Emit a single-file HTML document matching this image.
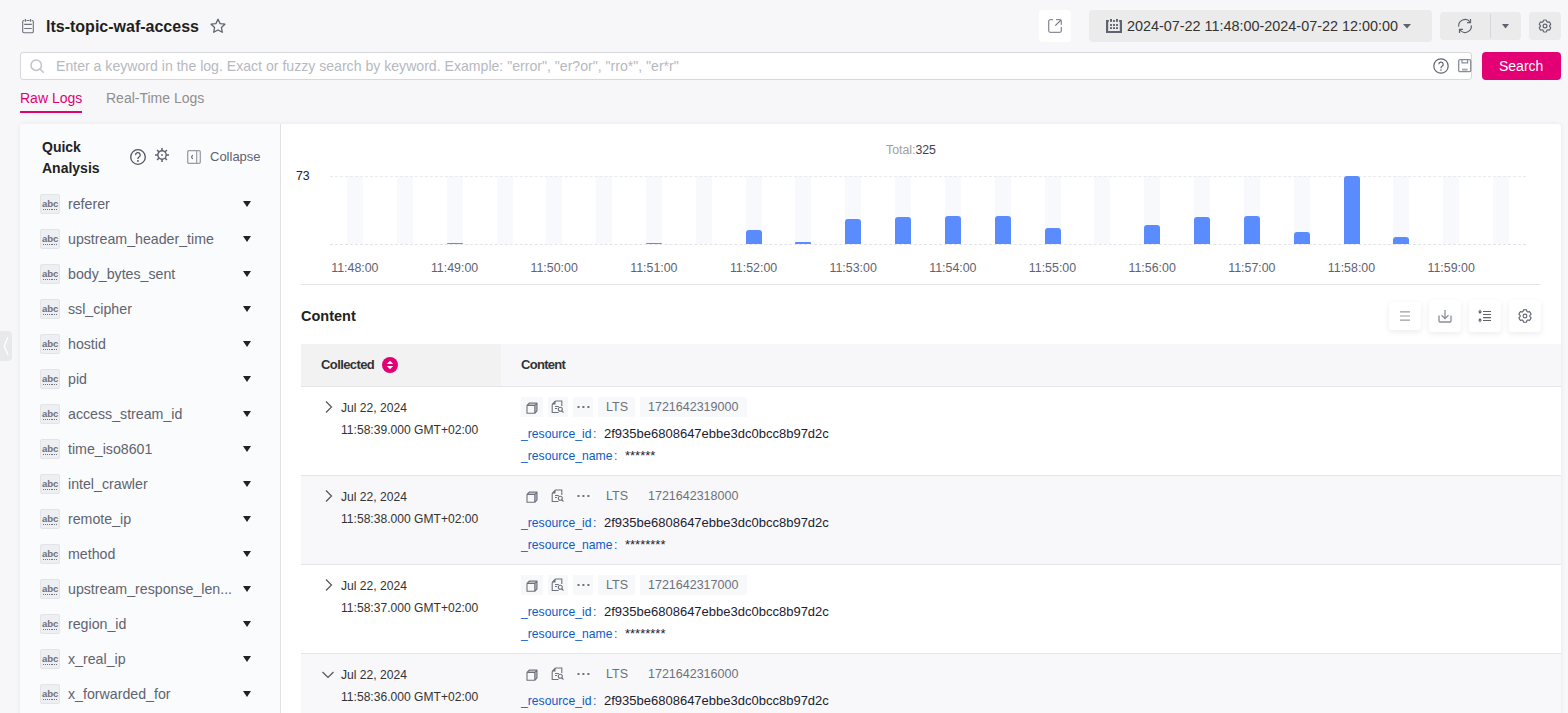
<!DOCTYPE html>
<html><head><meta charset="utf-8">
<style>
*{box-sizing:border-box;margin:0;padding:0}
html,body{width:1568px;height:713px;overflow:hidden}
body{background:#f7f7f9;font-family:"Liberation Sans",sans-serif;color:#222;position:relative}
.abs{position:absolute}
.t{position:absolute;white-space:nowrap;line-height:1}
svg{position:absolute;overflow:visible}
.btn{position:absolute;border-radius:4px}
.field{position:absolute;left:40px;width:230px;height:20px}
.field .ic{position:absolute;left:0;top:0;width:20px;height:20px;background:#eeeff2;border:1px solid #e3e4e8;border-radius:2px}
.field .ic span{position:absolute;left:1px;top:4px;font-size:9.6px;font-weight:bold;color:#6d717b;line-height:1;letter-spacing:-0.1px}
.field .ic i{position:absolute;left:2px;top:14px;width:15px;height:1.2px;background:repeating-linear-gradient(90deg,#6d717b 0 1.1px,transparent 1.1px 2.1px)}
.field .nm{position:absolute;left:28px;top:3px;font-size:14.2px;color:#5f6370;line-height:1;white-space:nowrap}
.field .dd{position:absolute;left:203px;top:7px;width:0;height:0;border-left:4.5px solid transparent;border-right:4.5px solid transparent;border-top:6px solid #222}
.slot{position:absolute;top:176px;width:16px;height:68px;background:#f8f9fd}
.bar{position:absolute;width:16px;background:#5b8cff;border-radius:3px 3px 0 0}
.xl{position:absolute;top:262px;font-size:12.4px;color:#5f6370;line-height:1;white-space:nowrap}
.row{position:absolute;left:301px;width:1260px;height:89px;border-bottom:1px solid #e4e5e8}
.row.g{background:#f8f8fa}
.row .chev{position:absolute;left:24px;top:14px}
.row .d1{position:absolute;left:40px;top:15px;font-size:12.1px;color:#333;line-height:1;white-space:nowrap}
.row .d2{position:absolute;left:40px;top:37px;font-size:12.1px;color:#333;line-height:1;white-space:nowrap}
.tg{position:absolute;top:10px;height:20px;background:#f7f8fa}
.row.g .tg{background:transparent}
.tg .tx{position:absolute;top:4px;font-size:12.5px;color:#6d717b;line-height:1;white-space:nowrap}
.kv{position:absolute;left:220px;font-size:13px;line-height:1;white-space:nowrap}
.kv b{font-weight:normal;color:#0d5bc6;font-size:12.2px}
.kv b i{font-style:normal;margin-left:1.5px}
.kv span{color:#1c2130}
</style></head><body>

<!-- header -->
<svg style="left:22px;top:19px" width="12" height="14" viewBox="0 0 12 14"><path d="M2.3 1.5H1.9A1.2 1.2 0 0 0 .7 2.7v9.8a1.2 1.2 0 0 0 1.2 1.2h8.2a1.2 1.2 0 0 0 1.2-1.2V2.7a1.2 1.2 0 0 0-1.2-1.2H9.7M4.5 1.5h2.9" fill="none" stroke="#6d717b" stroke-width="1.1"/><path d="M3.4 0v2.8M8.5 0v2.8" stroke="#6d717b" stroke-width="1.2"/><path d="M2.2 5.4h7.6M2.2 9.5h7.6" stroke="#6d717b" stroke-width="1.1"/></svg>
<div class="t" style="left:46px;top:19px;font-size:16px;font-weight:bold;color:#1f1f1f">lts-topic-waf-access</div>
<svg style="left:210px;top:18px" width="16" height="16" viewBox="0 0 16 16"><path d="M8 1.2l2.1 4.4 4.8.6-3.5 3.3.9 4.8L8 12l-4.3 2.3.9-4.8L1.1 6.2l4.8-.6z" fill="none" stroke="#5f6370" stroke-width="1.3" stroke-linejoin="round"/></svg>

<div class="btn" style="left:1039px;top:10px;width:32px;height:32px;background:#fff"></div>
<svg style="left:1048px;top:19px" width="14" height="14" viewBox="0 0 14 14"><path d="M5 .7H2.2A1.5 1.5 0 0 0 .7 2.2v9.6a1.5 1.5 0 0 0 1.5 1.5h9.6a1.5 1.5 0 0 0 1.5-1.5V8.1M8 .7h3.8a1.5 1.5 0 0 1 1.5 1.5V5.8" fill="none" stroke="#8a8e99" stroke-width="1.3"/><path d="M7.3 6.6L12.9 1.1" stroke="#6d717b" stroke-width="1.2"/></svg>

<div class="btn" style="left:1089px;top:10px;width:343px;height:32px;background:#ebebeb"></div>
<svg style="left:1106px;top:19px" width="16" height="14" viewBox="0 0 16 14"><g fill="#5f6370"><rect x="0" y="1" width="2.2" height="13"/><rect x="13.8" y="1" width="2.2" height="13"/><rect x="0" y="12" width="16" height="2"/><rect x="0" y="1" width="2.8" height="2"/><rect x="13.2" y="1" width="2.8" height="2"/><rect x="4" y="0" width="2" height="2.8"/><rect x="10" y="0" width="2" height="2.8"/><rect x="7" y="1.1" width="2" height="1.8"/><rect x="4" y="5.1" width="2" height="1.8"/><rect x="7" y="5.1" width="2" height="1.8"/><rect x="10" y="5.1" width="2" height="1.8"/><rect x="4" y="8.2" width="2" height="1.8"/><rect x="7" y="8.2" width="2" height="1.8"/><rect x="10" y="8.2" width="2" height="1.8"/></g></svg>
<div class="t" style="left:1127px;top:19px;font-size:14.4px;color:#333">2024-07-22 11:48:00-2024-07-22 12:00:00</div>
<svg style="left:1403px;top:24px" width="8" height="5" viewBox="0 0 8 5"><path d="M0 0h8L4 4.5z" fill="#5f6370"/></svg>

<div class="btn" style="left:1440px;top:12px;width:81px;height:28px;background:#ebebeb"></div>
<div class="abs" style="left:1490px;top:14px;width:1px;height:24px;background:#d4d5d8"></div>
<svg style="left:1458px;top:18px" width="14" height="16" viewBox="0 0 14 16"><path d="M.7 8.6A6.4 6.4 0 0 1 12.1 4M13.3 7.4A6.4 6.4 0 0 1 1.9 12" fill="none" stroke="#5f6370" stroke-width="1.2"/><path d="M12.5 1v3.6H9M1.5 15V11.4H5" fill="none" stroke="#5f6370" stroke-width="1.2"/></svg>
<svg style="left:1502px;top:24px" width="7" height="5" viewBox="0 0 7 5"><path d="M0 0h7L3.5 4.5z" fill="#5f6370"/></svg>

<div class="btn" style="left:1529px;top:12px;width:32px;height:28px;background:#ebebeb"></div>
<svg style="left:1538px;top:19px" width="14" height="14" viewBox="0 0 14 14"><path d="M5.01 2.52L5.48 0.89A6.3 6.3 0 0 1 8.52 0.89L8.99 2.52A4.9 4.9 0 0 1 9.88 3.04L11.53 2.62A6.3 6.3 0 0 1 13.06 5.26L11.87 6.49A4.9 4.9 0 0 1 11.87 7.51L13.06 8.74A6.3 6.3 0 0 1 11.53 11.38L9.88 10.96A4.9 4.9 0 0 1 8.99 11.48L8.52 13.11A6.3 6.3 0 0 1 5.48 13.11L5.01 11.48A4.9 4.9 0 0 1 4.12 10.96L2.47 11.38A6.3 6.3 0 0 1 0.94 8.74L2.13 7.51A4.9 4.9 0 0 1 2.13 6.49L0.94 5.26A6.3 6.3 0 0 1 2.47 2.62L4.12 3.04A4.9 4.9 0 0 1 5.01 2.52Z" fill="none" stroke="#5f6370" stroke-width="1.2" stroke-linejoin="round" transform="translate(7 7) scale(0.95) translate(-7 -7)"/><circle cx="7" cy="7" r="1.9" fill="none" stroke="#5f6370" stroke-width="1.2"/></svg>

<!-- search -->
<div class="abs" style="left:20px;top:52px;width:1452px;height:28px;background:#fff;border:1px solid #d6d8dd;border-radius:3px"></div>
<svg style="left:30px;top:59px" width="15" height="15" viewBox="0 0 15 15"><circle cx="6.2" cy="6.2" r="5.2" fill="none" stroke="#c2c4c9" stroke-width="1.5"/><path d="M10 10l3.8 3.8" stroke="#c2c4c9" stroke-width="1.6"/></svg>
<div class="t" style="left:56px;top:59px;font-size:14.1px;color:#b6b9bf">Enter a keyword in the log. Exact or fuzzy search by keyword. Example: "error", "er?or", "rro*", "er*r"</div>
<svg style="left:1433px;top:58px" width="16" height="16" viewBox="0 0 16 16"><circle cx="8" cy="8" r="7.2" fill="none" stroke="#5f6370" stroke-width="1.2"/><path d="M5.8 6.2a2.2 2.2 0 1 1 3.2 2c-.7.4-1 .8-1 1.6v.4" fill="none" stroke="#5f6370" stroke-width="1.2"/><circle cx="8" cy="12" r=".8" fill="#5f6370"/></svg>
<svg style="left:1458px;top:59px" width="14" height="14" viewBox="0 0 14 14"><path d="M2 .7h9.4a1.3 1.3 0 0 1 1.3 1.3v9.4a1.3 1.3 0 0 1-1.3 1.3H2A1.3 1.3 0 0 1 .7 11.4V2A1.3 1.3 0 0 1 2 .7z" fill="none" stroke="#8a8e99" stroke-width="1.3"/><path d="M4 .7v3.2h5.6V.7" fill="none" stroke="#8a8e99" stroke-width="1.2"/><rect x="4" y="9.6" width="5.6" height="2" fill="#a9acb3"/></svg>
<div class="btn" style="left:1482px;top:52px;width:79px;height:28px;background:#e20074"></div>
<div class="t" style="left:1499px;top:59px;font-size:14px;color:#fff">Search</div>

<!-- tabs -->
<div class="t" style="left:20px;top:91px;font-size:14px;color:#e20074">Raw Logs</div>
<div class="abs" style="left:20px;top:111px;width:62px;height:2px;background:#e20074"></div>
<div class="t" style="left:106px;top:91px;font-size:14px;color:#8f8f8f">Real-Time Logs</div>

<!-- left panel -->
<div class="abs" style="left:20px;top:124px;width:1541px;height:600px;background:#fff;box-shadow:0 0 5px rgba(0,0,0,0.07);border-radius:3px 4px 0 0"></div>
<div class="abs" style="left:20px;top:124px;width:261px;height:600px;background:#fafbfd;border-right:1px solid #e2e2e4;border-radius:3px 0 0 0"></div>
<div class="t" style="left:42px;top:137px;font-size:14px;font-weight:bold;color:#222;line-height:20.6px;white-space:normal;width:60px">Quick Analysis</div>
<svg style="left:130px;top:149px" width="16" height="16" viewBox="0 0 16 16"><circle cx="8" cy="8" r="7.3" fill="none" stroke="#4f5460" stroke-width="1.3"/><path d="M5.6 6.1a2.3 2.3 0 1 1 3.4 1.9c-.7.5-1.1.9-1.1 1.7v.3" fill="none" stroke="#4f5460" stroke-width="1.3"/><circle cx="7.9" cy="12" r=".9" fill="#4f5460"/></svg>
<svg style="left:155px;top:148px" width="14" height="14" viewBox="0 0 14 14"><g stroke="#5f6370" stroke-width="1.5"><path d="M7 0v3M7 11v3M0 7h3M11 7h3M2.05 2.05l2 2M9.95 9.95l2 2M11.95 2.05l-2 2M4.05 9.95l-2 2"/></g><circle cx="7" cy="7" r="4.2" fill="none" stroke="#5f6370" stroke-width="1.4"/><rect x="6.2" y="6.2" width="1.6" height="1.6" fill="#5f6370"/></svg>
<svg style="left:187px;top:150px" width="14" height="14" viewBox="0 0 14 14"><rect x=".7" y=".7" width="12.6" height="12.6" rx="1.2" fill="none" stroke="#9a9da5" stroke-width="1.3"/><path d="M9.7 .7v12.6" stroke="#9a9da5" stroke-width="1.2"/><path d="M5.6 5L4.6 7l1 2" fill="none" stroke="#5f6370" stroke-width="1.1"/></svg>
<div class="t" style="left:210px;top:150px;font-size:13px;color:#5f6370">Collapse</div>

<div class="field" style="top:194px"><div class="ic"><span>abc</span><i></i></div><div class="nm">referer</div><div class="dd"></div></div>
<div class="field" style="top:229px"><div class="ic"><span>abc</span><i></i></div><div class="nm">upstream_header_time</div><div class="dd"></div></div>
<div class="field" style="top:264px"><div class="ic"><span>abc</span><i></i></div><div class="nm">body_bytes_sent</div><div class="dd"></div></div>
<div class="field" style="top:299px"><div class="ic"><span>abc</span><i></i></div><div class="nm">ssl_cipher</div><div class="dd"></div></div>
<div class="field" style="top:334px"><div class="ic"><span>abc</span><i></i></div><div class="nm">hostid</div><div class="dd"></div></div>
<div class="field" style="top:369px"><div class="ic"><span>abc</span><i></i></div><div class="nm">pid</div><div class="dd"></div></div>
<div class="field" style="top:404px"><div class="ic"><span>abc</span><i></i></div><div class="nm">access_stream_id</div><div class="dd"></div></div>
<div class="field" style="top:439px"><div class="ic"><span>abc</span><i></i></div><div class="nm">time_iso8601</div><div class="dd"></div></div>
<div class="field" style="top:474px"><div class="ic"><span>abc</span><i></i></div><div class="nm">intel_crawler</div><div class="dd"></div></div>
<div class="field" style="top:509px"><div class="ic"><span>abc</span><i></i></div><div class="nm">remote_ip</div><div class="dd"></div></div>
<div class="field" style="top:544px"><div class="ic"><span>abc</span><i></i></div><div class="nm">method</div><div class="dd"></div></div>
<div class="field" style="top:579px"><div class="ic"><span>abc</span><i></i></div><div class="nm">upstream_response_len...</div><div class="dd"></div></div>
<div class="field" style="top:614px"><div class="ic"><span>abc</span><i></i></div><div class="nm">region_id</div><div class="dd"></div></div>
<div class="field" style="top:649px"><div class="ic"><span>abc</span><i></i></div><div class="nm">x_real_ip</div><div class="dd"></div></div>
<div class="field" style="top:684px"><div class="ic"><span>abc</span><i></i></div><div class="nm">x_forwarded_for</div><div class="dd"></div></div>

<!-- collapse handle -->
<div class="abs" style="left:0;top:331px;width:12px;height:30px;background:#e8e9eb;border-radius:0 4px 4px 0"></div>
<svg style="left:3px;top:336px" width="6" height="20" viewBox="0 0 6 20"><path d="M5 1L1.2 10 5 19" fill="none" stroke="#fff" stroke-width="1.3"/></svg>

<!-- main panel -->


<div class="t" style="left:886px;top:144px;font-size:12.3px;color:#a0a0a0">Total:<span style="color:#3d4252">325</span></div>
<div class="t" style="left:296px;top:170px;font-size:12.3px;color:#222">73</div>
<div class="slot" style="left:347px"></div>
<div class="slot" style="left:397px"></div>
<div class="slot" style="left:447px"></div>
<div class="slot" style="left:497px"></div>
<div class="slot" style="left:546px"></div>
<div class="slot" style="left:596px"></div>
<div class="slot" style="left:646px"></div>
<div class="slot" style="left:696px"></div>
<div class="slot" style="left:746px"></div>
<div class="slot" style="left:795px"></div>
<div class="slot" style="left:845px"></div>
<div class="slot" style="left:895px"></div>
<div class="slot" style="left:945px"></div>
<div class="slot" style="left:995px"></div>
<div class="slot" style="left:1045px"></div>
<div class="slot" style="left:1094px"></div>
<div class="slot" style="left:1144px"></div>
<div class="slot" style="left:1194px"></div>
<div class="slot" style="left:1244px"></div>
<div class="slot" style="left:1294px"></div>
<div class="slot" style="left:1344px"></div>
<div class="slot" style="left:1393px"></div>
<div class="slot" style="left:1443px"></div>
<div class="slot" style="left:1493px"></div>
<div class="abs" style="left:330px;top:176px;width:1196px;height:0;border-top:1px dashed #e9eaee"></div>
<div class="abs" style="left:330px;top:244px;width:1196px;height:0;border-top:1px dashed #e3e4e8"></div>
<div class="bar" style="left:447px;top:242.5px;height:1.5px;border-radius:1px 1px 0 0"></div>
<div class="bar" style="left:646px;top:242.5px;height:1.5px;border-radius:1px 1px 0 0"></div>
<div class="bar" style="left:746px;top:230.0px;height:14.0px;"></div>
<div class="bar" style="left:795px;top:242.1px;height:1.9px;border-radius:1px 1px 0 0"></div>
<div class="bar" style="left:845px;top:218.8px;height:25.2px;"></div>
<div class="bar" style="left:895px;top:217.0px;height:27.0px;"></div>
<div class="bar" style="left:945px;top:216.1px;height:27.9px;"></div>
<div class="bar" style="left:995px;top:216.1px;height:27.9px;"></div>
<div class="bar" style="left:1045px;top:228.2px;height:15.8px;"></div>
<div class="bar" style="left:1144px;top:225.4px;height:18.6px;"></div>
<div class="bar" style="left:1194px;top:217.0px;height:27.0px;"></div>
<div class="bar" style="left:1244px;top:216.1px;height:27.9px;"></div>
<div class="bar" style="left:1294px;top:231.9px;height:12.1px;"></div>
<div class="bar" style="left:1344px;top:176.0px;height:68.0px;"></div>
<div class="bar" style="left:1393px;top:236.5px;height:7.5px;"></div>
<div class="xl" style="left:331.2px">11:48:00</div>
<div class="xl" style="left:430.9px">11:49:00</div>
<div class="xl" style="left:530.5px">11:50:00</div>
<div class="xl" style="left:630.2px">11:51:00</div>
<div class="xl" style="left:729.9px">11:52:00</div>
<div class="xl" style="left:829.5px">11:53:00</div>
<div class="xl" style="left:929.2px">11:54:00</div>
<div class="xl" style="left:1028.8px">11:55:00</div>
<div class="xl" style="left:1128.5px">11:56:00</div>
<div class="xl" style="left:1228.2px">11:57:00</div>
<div class="xl" style="left:1327.8px">11:58:00</div>
<div class="xl" style="left:1427.5px">11:59:00</div>
<div class="abs" style="left:301px;top:284px;width:1240px;height:1px;background:#e4e5e8"></div>
<div class="t" style="left:301px;top:309px;font-size:14.5px;font-weight:bold;color:#222">Content</div>
<div class="btn" style="left:1389px;top:302px;width:32px;height:28px;background:#fff;box-shadow:0 2px 6px rgba(0,0,0,0.08)"></div>
<div class="btn" style="left:1429px;top:300px;width:32px;height:32px;background:#fff;box-shadow:0 2px 6px rgba(0,0,0,0.08)"></div>
<div class="btn" style="left:1469px;top:300px;width:32px;height:32px;background:#fff;box-shadow:0 2px 6px rgba(0,0,0,0.08)"></div>
<div class="btn" style="left:1509px;top:300px;width:32px;height:32px;background:#fff;box-shadow:0 2px 6px rgba(0,0,0,0.08)"></div>
<svg style="left:1400px;top:311px" width="10" height="10" viewBox="0 0 10 10"><path d="M0 .8h10M0 5h10M0 9.2h10" stroke="#9a9da5" stroke-width="1.2"/></svg>
<svg style="left:1438px;top:309px" width="14" height="14" viewBox="0 0 14 14"><path d="M1 6.5v5.5a1 1 0 0 0 1 1h10a1 1 0 0 0 1-1V6.5" fill="none" stroke="#8a8e99" stroke-width="1.3"/><path d="M7 1v8.6M3.5 6.2L7 9.6 10.5 6.2" fill="none" stroke="#8a8e99" stroke-width="1.3"/></svg>
<svg style="left:1478px;top:309px" width="14" height="14" viewBox="0 0 14 14"><path d="M5 2.5h8M5 5.5h8M5 8.6h8M5 11.5h8" stroke="#5f6370" stroke-width="1.1"/><path d="M2 .8v2.4M2 13.2v-2.4" stroke="#5f6370" stroke-width="1.2"/><path d="M-.1 2.5H4.1L2 4.9zM-.1 11.5H4.1L2 9.1z" fill="#5f6370"/></svg>
<svg style="left:1518px;top:309px" width="14" height="14" viewBox="0 0 14 14"><path d="M5.01 2.52L5.48 0.89A6.3 6.3 0 0 1 8.52 0.89L8.99 2.52A4.9 4.9 0 0 1 9.88 3.04L11.53 2.62A6.3 6.3 0 0 1 13.06 5.26L11.87 6.49A4.9 4.9 0 0 1 11.87 7.51L13.06 8.74A6.3 6.3 0 0 1 11.53 11.38L9.88 10.96A4.9 4.9 0 0 1 8.99 11.48L8.52 13.11A6.3 6.3 0 0 1 5.48 13.11L5.01 11.48A4.9 4.9 0 0 1 4.12 10.96L2.47 11.38A6.3 6.3 0 0 1 0.94 8.74L2.13 7.51A4.9 4.9 0 0 1 2.13 6.49L0.94 5.26A6.3 6.3 0 0 1 2.47 2.62L4.12 3.04A4.9 4.9 0 0 1 5.01 2.52Z" fill="none" stroke="#5f6370" stroke-width="1.1" stroke-linejoin="round"/><circle cx="7" cy="7" r="1.9" fill="none" stroke="#5f6370" stroke-width="1.1"/></svg>
<div class="abs" style="left:301px;top:344px;width:1260px;height:43px;background:#f7f7f9;border-bottom:1px solid #e4e5e8"></div>
<div class="abs" style="left:301px;top:344px;width:200px;height:43px;background:#f2f2f3;border-bottom:1px solid #e4e5e8"></div>
<div class="t" style="left:321px;top:357.5px;font-size:13px;font-weight:bold;color:#333;letter-spacing:-0.6px">Collected</div>
<svg style="left:382px;top:357px" width="16" height="16" viewBox="0 0 16 16"><circle cx="8" cy="8" r="8" fill="#e20074"/><path d="M4.8 7h6.4L8 3.8zM4.8 9h6.4L8 12.2z" fill="#fff"/><path d="M4.5 8h7" stroke="#e20074" stroke-width="1"/></svg>
<div class="t" style="left:521px;top:357.5px;font-size:13px;font-weight:bold;color:#333;letter-spacing:-0.7px">Content</div>
<div class="row" style="top:387px"><svg class="chev" width="8" height="12" viewBox="0 0 8 12"><path d="M1 .5L6.5 6 1 11.5" fill="none" stroke="#555" stroke-width="1.2"/></svg>
<div class="d1">Jul 22, 2024</div><div class="d2">11:58:39.000 GMT+02:00</div>
<div class="tg" style="left:220px;width:22px"></div><div class="tg" style="left:247px;width:20px"></div><div class="tg" style="left:272px;width:20px"></div>
<div class="tg" style="left:297px;width:37px"><div class="tx" style="left:8px">LTS</div></div>
<div class="tg" style="left:339px;width:107px"><div class="tx" style="left:8px">1721642319000</div></div>
<svg style="left:225px;top:15px" width="12" height="12" viewBox="0 0 12 12"><path d="M1 3.5L3.5 1H11V8.8L8.8 11.3V3.5z" fill="#b9bcc3"/><path d="M1 3.5h7.8v7.8H1zM1 3.5L3.5 1H11L8.8 3.5M11 1V8.8L8.8 11.3" fill="none" stroke="#6d717b" stroke-width="1.1" stroke-linejoin="round"/></svg>
<svg style="left:250px;top:13px" width="14" height="14" viewBox="0 0 14 14"><path d="M1.2 4.5L4.5 1V4.5z" fill="#6d717b"/><path d="M4.5 1H10.8V6M1.2 4.5V12.5H7.5M1.2 4.5L4.5 1" fill="none" stroke="#6d717b" stroke-width="1.1"/><path d="M4 6.5h3.8M4 8.5h2" stroke="#6d717b" stroke-width="1"/><circle cx="9.3" cy="9.3" r="2" fill="none" stroke="#6d717b" stroke-width="1.1"/><path d="M10.8 10.8L12.5 12.5" stroke="#6d717b" stroke-width="1.1"/></svg>
<svg style="left:276px;top:19px" width="12" height="2" viewBox="0 0 12 2"><rect x=".5" y="0" width="2" height="2" fill="#6d717b"/><rect x="5.4" y="0" width="2" height="2" fill="#6d717b"/><rect x="10.4" y="0" width="2" height="2" fill="#6d717b"/></svg>
<div class="kv" style="top:40px"><b>_resource_id<i>:</i></b><span style="position:absolute;left:83px">2f935be6808647ebbe3dc0bcc8b97d2c</span></div>
<div class="kv" style="top:62px"><b>_resource_name<i>:</i></b><span style="position:absolute;left:104px">******</span></div>
</div>
<div class="row g" style="top:476px"><svg class="chev" width="8" height="12" viewBox="0 0 8 12"><path d="M1 .5L6.5 6 1 11.5" fill="none" stroke="#555" stroke-width="1.2"/></svg>
<div class="d1">Jul 22, 2024</div><div class="d2">11:58:38.000 GMT+02:00</div>
<div class="tg" style="left:220px;width:22px"></div><div class="tg" style="left:247px;width:20px"></div><div class="tg" style="left:272px;width:20px"></div>
<div class="tg" style="left:297px;width:37px"><div class="tx" style="left:8px">LTS</div></div>
<div class="tg" style="left:339px;width:107px"><div class="tx" style="left:8px">1721642318000</div></div>
<svg style="left:225px;top:15px" width="12" height="12" viewBox="0 0 12 12"><path d="M1 3.5L3.5 1H11V8.8L8.8 11.3V3.5z" fill="#b9bcc3"/><path d="M1 3.5h7.8v7.8H1zM1 3.5L3.5 1H11L8.8 3.5M11 1V8.8L8.8 11.3" fill="none" stroke="#6d717b" stroke-width="1.1" stroke-linejoin="round"/></svg>
<svg style="left:250px;top:13px" width="14" height="14" viewBox="0 0 14 14"><path d="M1.2 4.5L4.5 1V4.5z" fill="#6d717b"/><path d="M4.5 1H10.8V6M1.2 4.5V12.5H7.5M1.2 4.5L4.5 1" fill="none" stroke="#6d717b" stroke-width="1.1"/><path d="M4 6.5h3.8M4 8.5h2" stroke="#6d717b" stroke-width="1"/><circle cx="9.3" cy="9.3" r="2" fill="none" stroke="#6d717b" stroke-width="1.1"/><path d="M10.8 10.8L12.5 12.5" stroke="#6d717b" stroke-width="1.1"/></svg>
<svg style="left:276px;top:19px" width="12" height="2" viewBox="0 0 12 2"><rect x=".5" y="0" width="2" height="2" fill="#6d717b"/><rect x="5.4" y="0" width="2" height="2" fill="#6d717b"/><rect x="10.4" y="0" width="2" height="2" fill="#6d717b"/></svg>
<div class="kv" style="top:40px"><b>_resource_id<i>:</i></b><span style="position:absolute;left:83px">2f935be6808647ebbe3dc0bcc8b97d2c</span></div>
<div class="kv" style="top:62px"><b>_resource_name<i>:</i></b><span style="position:absolute;left:104px">********</span></div>
</div>
<div class="row" style="top:565px"><svg class="chev" width="8" height="12" viewBox="0 0 8 12"><path d="M1 .5L6.5 6 1 11.5" fill="none" stroke="#555" stroke-width="1.2"/></svg>
<div class="d1">Jul 22, 2024</div><div class="d2">11:58:37.000 GMT+02:00</div>
<div class="tg" style="left:220px;width:22px"></div><div class="tg" style="left:247px;width:20px"></div><div class="tg" style="left:272px;width:20px"></div>
<div class="tg" style="left:297px;width:37px"><div class="tx" style="left:8px">LTS</div></div>
<div class="tg" style="left:339px;width:107px"><div class="tx" style="left:8px">1721642317000</div></div>
<svg style="left:225px;top:15px" width="12" height="12" viewBox="0 0 12 12"><path d="M1 3.5L3.5 1H11V8.8L8.8 11.3V3.5z" fill="#b9bcc3"/><path d="M1 3.5h7.8v7.8H1zM1 3.5L3.5 1H11L8.8 3.5M11 1V8.8L8.8 11.3" fill="none" stroke="#6d717b" stroke-width="1.1" stroke-linejoin="round"/></svg>
<svg style="left:250px;top:13px" width="14" height="14" viewBox="0 0 14 14"><path d="M1.2 4.5L4.5 1V4.5z" fill="#6d717b"/><path d="M4.5 1H10.8V6M1.2 4.5V12.5H7.5M1.2 4.5L4.5 1" fill="none" stroke="#6d717b" stroke-width="1.1"/><path d="M4 6.5h3.8M4 8.5h2" stroke="#6d717b" stroke-width="1"/><circle cx="9.3" cy="9.3" r="2" fill="none" stroke="#6d717b" stroke-width="1.1"/><path d="M10.8 10.8L12.5 12.5" stroke="#6d717b" stroke-width="1.1"/></svg>
<svg style="left:276px;top:19px" width="12" height="2" viewBox="0 0 12 2"><rect x=".5" y="0" width="2" height="2" fill="#6d717b"/><rect x="5.4" y="0" width="2" height="2" fill="#6d717b"/><rect x="10.4" y="0" width="2" height="2" fill="#6d717b"/></svg>
<div class="kv" style="top:40px"><b>_resource_id<i>:</i></b><span style="position:absolute;left:83px">2f935be6808647ebbe3dc0bcc8b97d2c</span></div>
<div class="kv" style="top:62px"><b>_resource_name<i>:</i></b><span style="position:absolute;left:104px">********</span></div>
</div>
<div class="row g" style="top:654px"><svg class="chev" style="left:21px;top:17px" width="12" height="8" viewBox="0 0 12 8"><path d="M.5 1L6 6.5 11.5 1" fill="none" stroke="#555" stroke-width="1.2"/></svg>
<div class="d1">Jul 22, 2024</div><div class="d2">11:58:36.000 GMT+02:00</div>
<div class="tg" style="left:220px;width:22px"></div><div class="tg" style="left:247px;width:20px"></div><div class="tg" style="left:272px;width:20px"></div>
<div class="tg" style="left:297px;width:37px"><div class="tx" style="left:8px">LTS</div></div>
<div class="tg" style="left:339px;width:107px"><div class="tx" style="left:8px">1721642316000</div></div>
<svg style="left:225px;top:15px" width="12" height="12" viewBox="0 0 12 12"><path d="M1 3.5L3.5 1H11V8.8L8.8 11.3V3.5z" fill="#b9bcc3"/><path d="M1 3.5h7.8v7.8H1zM1 3.5L3.5 1H11L8.8 3.5M11 1V8.8L8.8 11.3" fill="none" stroke="#6d717b" stroke-width="1.1" stroke-linejoin="round"/></svg>
<svg style="left:250px;top:13px" width="14" height="14" viewBox="0 0 14 14"><path d="M1.2 4.5L4.5 1V4.5z" fill="#6d717b"/><path d="M4.5 1H10.8V6M1.2 4.5V12.5H7.5M1.2 4.5L4.5 1" fill="none" stroke="#6d717b" stroke-width="1.1"/><path d="M4 6.5h3.8M4 8.5h2" stroke="#6d717b" stroke-width="1"/><circle cx="9.3" cy="9.3" r="2" fill="none" stroke="#6d717b" stroke-width="1.1"/><path d="M10.8 10.8L12.5 12.5" stroke="#6d717b" stroke-width="1.1"/></svg>
<svg style="left:276px;top:19px" width="12" height="2" viewBox="0 0 12 2"><rect x=".5" y="0" width="2" height="2" fill="#6d717b"/><rect x="5.4" y="0" width="2" height="2" fill="#6d717b"/><rect x="10.4" y="0" width="2" height="2" fill="#6d717b"/></svg>
<div class="kv" style="top:40px"><b>_resource_id<i>:</i></b><span style="position:absolute;left:83px">2f935be6808647ebbe3dc0bcc8b97d2c</span></div>
<div class="kv" style="top:62px"><b>_resource_name<i>:</i></b><span style="position:absolute;left:104px">********</span></div>
</div>

</body></html>
